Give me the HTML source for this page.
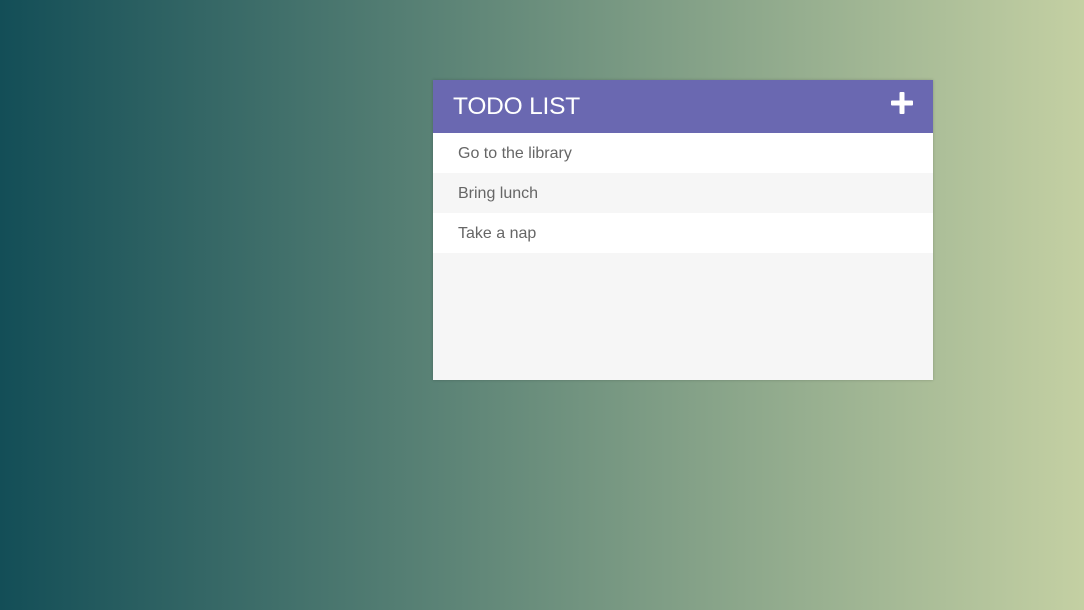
<!DOCTYPE html>
<html><head><style>
html,body{margin:0;padding:0;width:1084px;height:610px;overflow:hidden;}
body{background:linear-gradient(to right,#134e57 0%,#c4d0a3 100%);font-family:"Liberation Sans",sans-serif;position:relative;}
.card{position:absolute;left:433px;top:80px;width:500px;height:300px;background:#f6f6f6;box-shadow:0 0 3px rgba(0,0,0,.2);}
.hd{height:53px;background:#6a68b1;position:relative;}
.hd h1{margin:0;position:absolute;left:20px;top:13px;font-size:24.5px;font-weight:normal;color:#fff;letter-spacing:-0.2px;}
.row{height:40px;line-height:42px;padding-left:25px;font-size:16px;color:#666;}
.w{background:#fff;}
</style></head><body>
<div class="card">
<div class="hd"><h1>TODO LIST</h1>
<svg style="position:absolute;left:458px;top:12px" width="22" height="22" viewBox="0 0 22 22"><rect x="8.5" y="0" width="5" height="22" rx="1" fill="#fff"/><rect x="0" y="8.5" width="22" height="5" rx="1" fill="#fff"/></svg>
</div>
<div class="row w">Go to the library</div>
<div class="row">Bring lunch</div>
<div class="row w">Take a nap</div>
</div>
</body></html>
